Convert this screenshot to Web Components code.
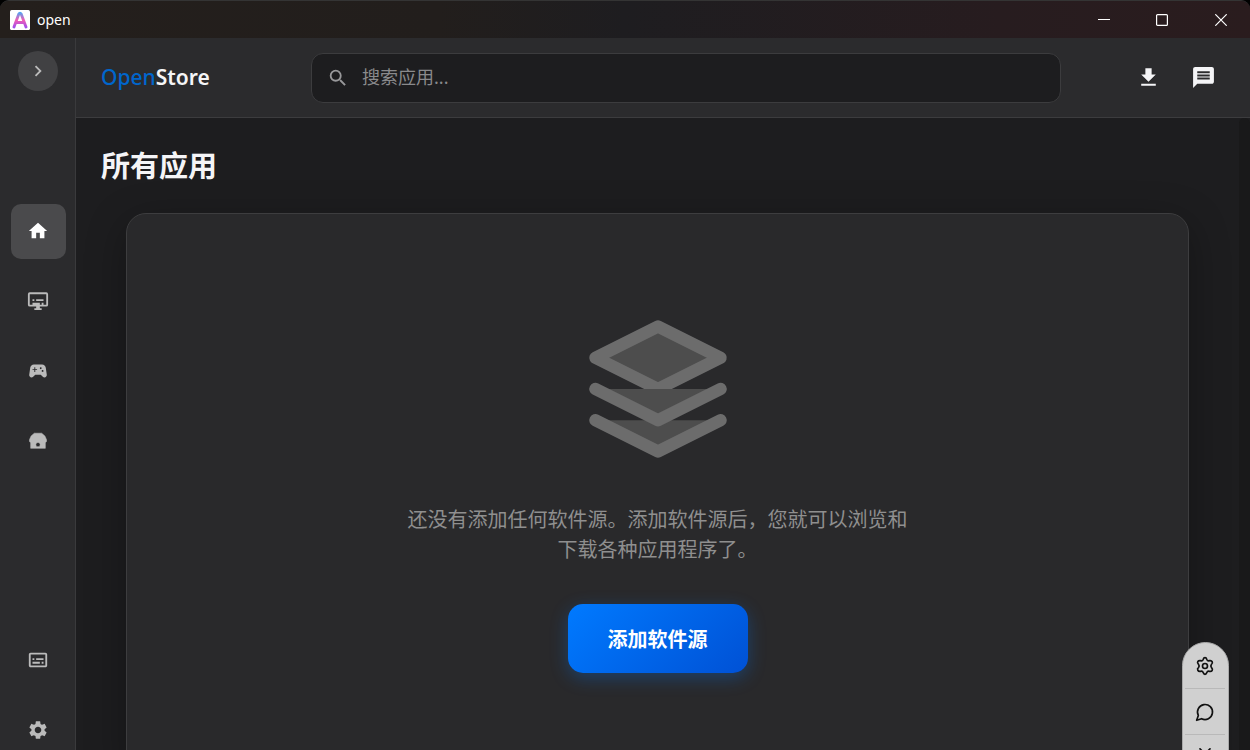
<!DOCTYPE html>
<html lang="zh-CN">
<head>
<meta charset="utf-8">
<meta name="viewport" content="width=device-width, initial-scale=1">
<title>open</title>
<style>
  html, body { margin: 0; height: 100%; background: #000; overflow: hidden; }
  body { font-family: "Noto Sans", "Noto Sans CJK SC", sans-serif; color: #f5f5f7; }
</style>
</head>
<body>
<app-window>
  <title-bar slot="titlebar">open</title-bar>
  <side-bar slot="sidebar"></side-bar>
  <store-header slot="header"></store-header>
  <store-page slot="page" heading="所有应用">
    <empty-state action="添加软件源">还没有添加任何软件源。添加软件源后，您就可以浏览和下载各种应用程序了。</empty-state>
  </store-page>
  <float-tools slot="overlay"></float-tools>
</app-window>

<script>
const define = (name, html) => customElements.define(name, class extends HTMLElement {
  constructor() {
    super();
    const t = document.createElement('template');
    t.innerHTML = html.replace(/\{(\w+)\}/g, (_, a) => this.getAttribute(a) || '');
    this.attachShadow({ mode: 'open' }).append(t.content.cloneNode(true));
  }
});

const reset = `
  *, *::before { box-sizing: border-box; }
  button { font: inherit; color: inherit; background: none; border: 0; padding: 0; margin: 0; cursor: pointer; display: flex; align-items: center; justify-content: center; }
  svg { display: block; }
`;

define('app-window', `<style>${reset}
  :host { display: flex; flex-direction: column; height: 100vh; position: relative; overflow: hidden; box-sizing: border-box; border-top: 1px solid #343434; border-radius: 9px 9px 0 0; background: #1d1d1f; }
  .body { flex: 1; display: flex; min-height: 0; }
  .main { flex: 1; display: flex; flex-direction: column; min-width: 0; }
</style>
<slot name="titlebar"></slot>
<div class="body">
  <slot name="sidebar"></slot>
  <div class="main"><slot name="header"></slot><slot name="page"></slot></div>
</div>
<slot name="overlay"></slot>`);

define('title-bar', `<style>${reset}
  :host { display: flex; align-items: center; flex: none; height: 37px; padding-left: 10px; background: linear-gradient(90deg, #241f1c, #221e1c 35%, #1e1d20 50%, #271c1f 80%, #2a1c1e); font-size: 14px; color: #fff; }
  .name { flex: 1; margin-left: 7px; }
  button { width: 58px; height: 37px; }
  button:last-child { width: 59px; }
</style>
<svg width="20" height="20" viewBox="0 0 20 20" aria-hidden="true">
  <defs><linearGradient id="g" gradientUnits="userSpaceOnUse" x1="0" y1="2" x2="0" y2="18"><stop offset="0" stop-color="#4aa8f5"/><stop offset=".5" stop-color="#f25cb4"/><stop offset="1" stop-color="#9b4df0"/></linearGradient></defs>
  <rect width="20" height="20" rx="1.5" fill="#fff"/>
  <path d="M4 17L8.700 4.300Q10 1.900 11.300 4.300L16 17M6.600 12.500H13.400" fill="none" stroke="url(#g)" stroke-width="2.900" stroke-linecap="round"/>
</svg>
<span class="name"><slot></slot></span>
<button aria-label="最小化"><svg width="12" height="12" viewBox="0 0 12 12"><path d="M0 5.500H12" stroke="#fff"/></svg></button>
<button aria-label="最大化"><svg width="12" height="12" viewBox="0 0 12 12"><rect x=".6" y=".6" width="10.800" height="10.800" rx="1" fill="none" stroke="#fff" stroke-width="1.200"/></svg></button>
<button aria-label="关闭"><svg width="12" height="12" viewBox="0 0 12 12"><path d="M.3 .3L11.700 11.700M11.700 .3L.3 11.700" stroke="#fff" stroke-width="1.200"/></svg></button>`);

define('side-bar', `<style>${reset}
  :host { display: flex; flex-direction: column; align-items: center; flex: none; width: 76px; box-sizing: border-box; padding-top: 13px; background: #2b2b2d; border-right: 1px solid #3a3a3c; color: #bbb; }
  .toggle { width: 40px; height: 40px; border-radius: 50%; background: #414143; }
  nav { display: flex; flex-direction: column; gap: 15px; margin: 113px 0 auto 2px; }
  nav + nav { margin: 0 0 -8px 2px; }
  nav button { width: 55px; height: 55px; border-radius: 10px; padding: 0 1px 1px 0; }
  .active { background: #4a4a4c; color: #fff; }
  svg { fill: currentColor; }
</style>
<button class="toggle" aria-label="展开"><svg width="22" height="22" viewBox="0 0 24 24"><path d="M8.590 16.590L13.170 12 8.590 7.410 10 6l6 6-6 6z"/></svg></button>
<nav>
  <button class="active" aria-label="首页"><svg width="22" height="22" viewBox="0 0 24 24"><path d="M10 20v-6h4v6h5v-8h3L12 3 2 12h3v8z"/></svg></button>
  <button aria-label="软件"><svg width="22" height="22" viewBox="0 0 24 24"><path d="M21 2.500H3Q1 2.500 1 4.500V16Q1 18 3 18H10V20H8V21.700H16V20H14V18H21Q23 18 23 16V4.500Q23 2.500 21 2.500ZM21 16H18V14H16V16H14V14H6V16H3V4.500H21ZM6 10H8V12H6ZM10 10H18V12H10Z"/></svg></button>
  <button aria-label="游戏"><svg width="22" height="22" viewBox="0 0 24 24"><path d="M21.580 16.090l-1.090-7.660C20.210 6.460 18.520 5 16.530 5H7.470C5.480 5 3.790 6.460 3.510 8.430l-1.090 7.660C2.200 17.630 3.390 19 4.940 19c.68 0 1.320-.27 1.800-.75L9 16h6l2.250 2.250c.48.48 1.130.75 1.800.75 1.560 0 2.750-1.370 2.530-2.910zM11 11H9v2H8v-2H6v-1h2V8h1v2h2v1zm4-1c-.55 0-1-.45-1-1s.45-1 1-1 1 .45 1 1-.45 1-1 1zm2 3c-.55 0-1-.45-1-1s.45-1 1-1 1 .45 1 1-.45 1-1 1z"/></svg></button>
  <button aria-label="软件源"><svg width="22" height="22" viewBox="0 0 24 24"><path fill-rule="evenodd" d="M8 3.500H16L19.500 6.500 21.300 10.500V12.500L20 14V20H4V14L2.700 12.500V10.500L4.500 6.500ZM12 13.600a2.400 2.400 0 1 0 0 4.800 2.400 2.400 0 0 0 0-4.800Z" stroke="currentColor" stroke-width=".6" stroke-linejoin="round"/></svg></button>
</nav>
<nav>
  <button aria-label="详情"><svg width="22" height="22" viewBox="0 0 24 24"><path d="M20 4H4c-1.100 0-2 .9-2 2v12c0 1.100.9 2 2 2h16c1.100 0 2-.9 2-2V6c0-1.100-.9-2-2-2zm0 14H4V6h16v12zM6 10h2v2H6zm0 4h8v2H6zm10 0h2v2h-2zm-6-4h8v2h-8z"/></svg></button>
  <button aria-label="设置"><svg width="22" height="22" viewBox="0 0 24 24"><path d="M19.140 12.940c.04-.3.060-.61.060-.94 0-.32-.02-.64-.07-.94l2.030-1.580c.18-.14.23-.41.120-.61l-1.920-3.320c-.12-.22-.37-.29-.59-.22l-2.390.96c-.5-.38-1.030-.7-1.620-.94l-.36-2.540c-.04-.24-.24-.41-.48-.41h-3.840c-.24 0-.43.17-.47.41l-.36 2.540c-.59.24-1.130.57-1.620.94l-2.390-.96c-.22-.08-.47 0-.59.22L2.740 8.870c-.12.21-.08.470.12.61l2.030 1.580c-.05.3-.09.63-.09.94s.02.64.070.94l-2.030 1.580c-.18.14-.23.410-.12.61l1.920 3.320c.12.22.37.290.59.22l2.390-.96c.5.380 1.030.7 1.620.94l.36 2.540c.05.240.24.410.48.410h3.840c.24 0 .44-.17.470-.41l.36-2.540c.59-.24 1.130-.56 1.620-.94l2.390.96c.22.080.47 0 .59-.22l1.920-3.320c.12-.22.070-.47-.12-.61l-2.010-1.580zM12 15.600c-1.980 0-3.600-1.620-3.600-3.600s1.620-3.600 3.600-3.600 3.600 1.620 3.600 3.600-1.620 3.600-3.600 3.600z"/></svg></button>
</nav>`);

define('store-header', `<style>${reset}
  :host { display: grid; grid-template-columns: 210px minmax(0, 750px) auto; align-items: center; flex: none; height: 80px; box-sizing: border-box; padding: 0 22px 0 25px; background: #2b2b2d; border-bottom: 1px solid #3c3c3e; }
  .logo { font-size: 21px; font-weight: 600; padding-bottom: 2px; white-space: nowrap; color: #f5f5f7; text-decoration: none; }
  .logo span { color: #0066cc; font-weight: 500; }
  label { display: flex; align-items: center; height: 50px; padding: 0 15px; gap: 13px; background: #1d1d1f; border: 1px solid #3c3c3e; border-radius: 12px; color: #98989a; }
  input { flex: 1; min-width: 0; height: 32px; border: 0; padding: 0 0 2px; outline: 0; background: none; font: inherit; font-size: 18px; color: #f5f5f7; }
  input::placeholder { color: #8a8a8c; opacity: 1; }
  .actions { display: flex; justify-content: flex-end; gap: 5px; }
  .actions button { width: 50px; height: 50px; }
  svg { fill: currentColor; }
</style>
<a class="logo" href="#"><span>Open</span>Store</a>
<label><svg width="22" height="22" viewBox="0 0 24 24"><path d="M15.500 14h-.79l-.28-.27A6.470 6.470 0 0 0 16 9.500 6.500 6.500 0 1 0 9.500 16c1.610 0 3.090-.59 4.230-1.570l.27.280v.79l5 4.990L20.490 19l-4.990-5zm-6 0C7.010 14 5 11.990 5 9.500S7.010 5 9.500 5 14 7.010 14 9.500 11.990 14 9.500 14z"/></svg>
<input type="text" placeholder="搜索应用..." aria-label="搜索应用"></label>
<div class="actions">
  <button aria-label="下载"><svg width="25" height="25" viewBox="0 0 24 24"><path d="M19 9h-4V3H9v6H5l7 7 7-7zM5 18v2h14v-2H5z"/></svg></button>
  <button aria-label="消息"><svg width="25" height="25" viewBox="0 0 24 24"><path d="M20 2H4c-1.100 0-1.990.9-1.990 2L2 22l4-4h14c1.100 0 2-.9 2-2V4c0-1.100-.9-2-2-2zM6 6H18V8H6ZM6 9H18V11H6ZM6 12H18V14H6Z"/></svg></button>
</div>`);

define('store-page', `<style>${reset}
  :host { flex: 1; min-height: 0; display: flex; }
  main { flex: 1; min-width: 0; overflow: hidden; padding: 25px; }
  h1 { margin: 0 0 25px; font-size: 29px; line-height: 45px; font-weight: 700; }
  .track { flex: none; width: 11px; background: #19191a; border-radius: 5px 5px 0 0; }
</style>
<main><h1>{heading}</h1><slot></slot></main>
<div class="track"></div>`);

define('empty-state', `<style>${reset}
  :host { display: flex; flex-direction: column; align-items: center; gap: 40px; box-sizing: border-box; margin: 0 25px; padding: 100px 40px; background: #29292b; border: 1px solid #3d3d3f; border-radius: 20px; box-shadow: 0 10px 40px rgba(0,0,0,.3); font-family: "Noto Sans CJK SC", sans-serif; }
  p { margin: 0; max-width: 500px; font-size: 20px; line-height: 30px; text-align: center; color: #8f8f8f; }
  button { height: 69px; padding: 0 40px; border-radius: 15px; background: linear-gradient(135deg, #007aff, #0051d5); box-shadow: 0 5px 18px rgba(0,122,255,.3); font-size: 20px; font-weight: 700; color: #fff; }
</style>
<svg width="150" height="150" viewBox="0 0 24 24" fill="#4d4d4d" stroke="#6c6c6c" stroke-width="2" stroke-linecap="round" stroke-linejoin="round" aria-hidden="true"><path d="M12 2L2 7l10 5 10-5z"/><path d="M2 17l10 5 10-5"/><path d="M2 12l10 5 10-5"/></svg>
<p><slot></slot></p>
<button>{action}</button>`);

define('float-tools', `<style>${reset}
  :host { position: absolute; right: 21px; bottom: -31px; width: 47px; box-sizing: border-box; padding: 0 3px 0 2px; border-radius: 24px; border: 1px solid #aaa; background: #d0d0d0; color: #111; }
  button { width: 100%; height: 45px; }
  button + button { height: 46px; border-top: 1px solid #b9b9b9; }
  svg { fill: none; stroke: currentColor; stroke-width: 2; stroke-linecap: round; stroke-linejoin: round; }
</style>
<button aria-label="设置"><svg width="20" height="20" viewBox="0 0 24 24"><path d="M9.800 4.100Q10.400 2 12 2T14.200 4.100Q15 6.300 17.400 5.600 19.600 5 20.600 6.900T19.800 10Q18.200 12 19.800 14 21.600 15.800 20.600 17.300T17.400 18.400Q15 17.700 14.200 19.900 13.600 22 12 22T9.800 19.900Q9 17.700 6.600 18.400 4.400 19 3.400 17.100T4.200 14Q5.800 12 4.200 10 2.400 8.200 3.400 6.700T6.600 5.600Q9 6.300 9.800 4.100Z"/><circle cx="12" cy="12" r="3"/></svg></button>
<button aria-label="聊天"><svg width="20" height="20" viewBox="0 0 24 24"><path d="M7.900 20A9 9 0 1 0 4 16.100L2 22Z"/></svg></button>
<button aria-label="收起"><svg width="20" height="20" viewBox="0 0 24 24"><path d="M6 1L12 7 18 1"/></svg></button>`);
</script>
</body>
</html>
